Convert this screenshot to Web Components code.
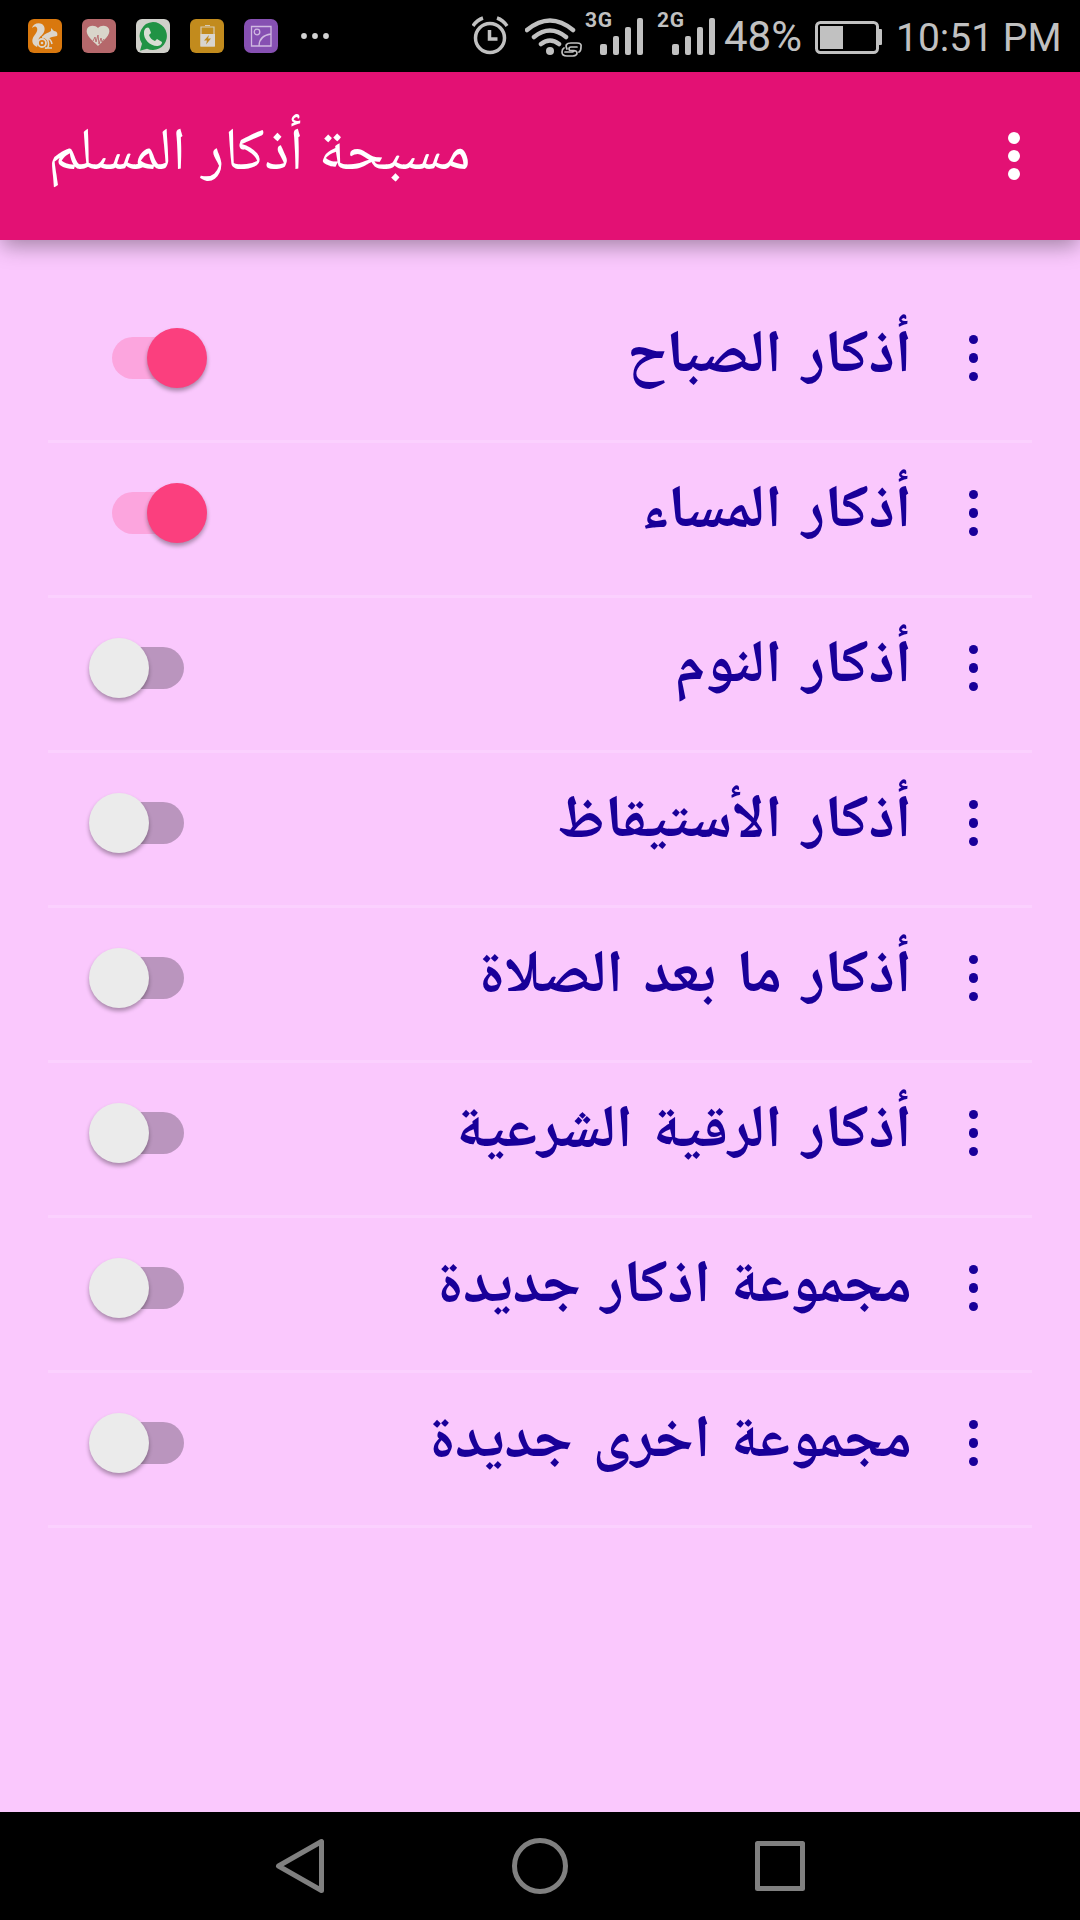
<!DOCTYPE html>
<html lang="ar">
<head>
<meta charset="utf-8">
<title>مسبحة أذكار المسلم</title>
<style>
  body {
    margin: 0;
    font-family: 'Noto Naskh Arabic', 'Noto Sans Arabic', 'DejaVu Sans', sans-serif;
  }
</style>
</head>
<body>
<azkar-app></azkar-app>

<script>
class StatusBar extends HTMLElement {
  constructor() {
    super();
    this.attachShadow({ mode: 'open' });
    this.shadowRoot.innerHTML = `
      <style>
        :host {
          display: flex;
          justify-content: space-between;
          height: 72px;
          background: #000;
          color: #c1c1c1;
          font-family: Roboto, sans-serif;
        }

        div {
          display: flex;
          align-items: center;
        }

        .apps {
          gap: 20px;
          padding-left: 28px;
        }

        .system {
          padding-right: 16px;
          white-space: nowrap;
        }

        svg {
          display: block;
          flex: none;
        }

        .percent {
          width: 90px;
          box-sizing: border-box;
          font-size: 42px;
          line-height: 72px;
          margin-top: 2px;
        }

        .time {
          width: 168px;
          padding-left: 2px;
          font-size: 39px;
          line-height: 72px;
          margin-top: 3px;
        }
      </style>
      <div class="apps">
        <svg width="34" height="34" viewBox="0 0 34 34">
          <rect width="34" height="34" rx="6" fill="#d9780e"/>
          <path fill="#dcd5cb" d="M4 9C5 5 10 3 14 5c4 3 3 8 0 11-2 2-4 3-3 6l-2 6c-5-2-6-7-3-11 2-3 4-5 3-8-1-2-3-2-5 0zM23 9l3 3c3 0 4 3 3 5l-5 1c-3 1-4 2-5 3-2-2-4-3-5-2 1-4 6-5 9-7z"/>
          <circle cx="14" cy="24" r="4" fill="none" stroke="#dcd5cb" stroke-width="1.800"/>
          <circle cx="14" cy="24" r="1.300" fill="#dcd5cb"/>
          <path d="M14 18q6 0 6.500 6t-3.500 5h7M19 19q4 1 5 6" fill="none" stroke="#dcd5cb" stroke-width="1.600"/>
        </svg>
        <svg width="34" height="34" viewBox="0 0 34 34">
          <rect width="34" height="34" rx="6" fill="#b5686b"/>
          <path fill="#d9d6ca" d="M16 9C13 6 7 6 5 10c-2 6 5 11 11 17 6-6 13-11 11-17-2-4-8-4-11-1z"/>
          <path d="M11 22l2-4 1 5 2-7 1 9 2-6 1 4 2-3" fill="none" stroke="#b5686b" stroke-width=".9"/>
        </svg>
        <svg width="34" height="34" viewBox="0 0 34 34">
          <rect width="34" height="34" rx="6" fill="#d0d0ca"/>
          <path fill="#219345" d="M17 3a14 14 0 1 1-6 26.700l-7 2 2-7A14 14 0 0 1 17 3z"/>
          <path fill="#d9ddd5" d="M10 9c2-1 3-1 4 2l1 3-2 2c1 3 3 5 6 6l2-2 5 3c0 3-3 4-5 4-7 0-14-7-13-14 0-2 1-3 2-4z"/>
        </svg>
        <svg width="34" height="34" viewBox="0 0 34 34">
          <rect width="34" height="34" rx="6" fill="#c28b1d"/>
          <path d="M11 8h13v19H11zM15 6.500h5" fill="none" stroke="#d8cbb4" stroke-width="1.200"/>
          <path fill="#d8d5cf" d="M10.500 15H25v12.500H10.500z"/>
          <path fill="#c28b1d" d="M19 16l-5 5.500h3l-1 4 5-6h-3z"/>
        </svg>
        <svg width="34" height="34" viewBox="0 0 34 34">
          <rect width="34" height="34" rx="7" fill="#8650b2"/>
          <g fill="none" stroke="#d0b9e1" stroke-width="1.300">
            <path d="M7.500 7.500h19.500V27H7.500zM15 27c0-7 5-11 12-12"/>
            <circle cx="13" cy="13" r="2.800"/>
          </g>
        </svg>
        <svg width="40" height="34" viewBox="0 0 40 34" fill="#d2d2d2">
          <circle cx="6" cy="17" r="2.900"/>
          <circle cx="17" cy="17" r="2.900"/>
          <circle cx="28" cy="17" r="2.900"/>
        </svg>
      </div>
      <div class="system">
        <svg width="53" height="72" viewBox="472 0 53 72" fill="none" stroke="#c1c1c1">
          <circle cx="490" cy="38" r="14.500" stroke-width="3.500"/>
          <path d="M489.500 30v9h8" stroke-width="3.500"/>
          <path d="M473 26q4-6 10-8M507 26q-4-6-10-8" stroke-width="3.500"/>
        </svg>
        <svg width="60" height="72" viewBox="525 0 60 72" fill="none" stroke="#c1c1c1" stroke-width="4.500" stroke-linecap="round">
          <path d="M527 30q23-19 46 0M534 37q16-13 32 0M541 44q9-7 18 0"/>
          <circle cx="550" cy="51" r="4" fill="#c1c1c1" stroke="none"/>
          <g stroke-width="1.700">
            <path d="M577 47h-6q-2 0-2 1.800t2 1.700h2q4 0 4 2.500t-4 3h-6q-5 0-5-4 0-3 2-4"/>
            <path d="M565 52h6q3 0 3-1.500M567 49q-3-6 4-6h6q5 0 4 4 0 4-2 5"/>
          </g>
        </svg>
        <svg width="72" height="72" viewBox="585 0 72 72" fill="#c1c1c1">
          <text x="585" y="27" font-size="21" font-weight="700" textLength="27">3G</text>
          <rect x="600" y="44" width="7" height="11" rx="2"/>
          <rect x="613" y="36" width="6" height="19" rx="2"/>
          <rect x="625" y="27" width="6" height="28" rx="2"/>
          <rect x="637" y="18" width="6" height="37" rx="2"/>
        </svg>
        <svg width="67" height="72" viewBox="585 0 67 72" fill="#c1c1c1">
          <text x="585" y="27" font-size="21" font-weight="700" textLength="27">2G</text>
          <rect x="600" y="44" width="7" height="11" rx="2"/>
          <rect x="613" y="36" width="6" height="19" rx="2"/>
          <rect x="625" y="27" width="6" height="28" rx="2"/>
          <rect x="637" y="18" width="6" height="37" rx="2"/>
        </svg>
        <span class="percent">48%</span>
        <svg width="80" height="72" viewBox="814 0 80 72">
          <rect x="816.500" y="22.500" width="61" height="30" rx="4" fill="none" stroke="#c1c1c1" stroke-width="3"/>
          <path fill="#c1c1c1" d="M820 26h23v23h-23zM878 29h3q1 0 1 1v14q0 1-1 1h-3z"/>
        </svg>
        <span class="time">10:51 PM</span>
      </div>
    `;
  }
}

class MoreButton extends HTMLElement {
  constructor() {
    super();
    this.attachShadow({ mode: 'open' });
    this.shadowRoot.innerHTML = `
      <style>
        :host {
          display: flex;
          flex-direction: column;
          align-items: center;
          gap: var(--dot-gap, 9px);
        }

        i {
          width: var(--dot-size, 9.2px);
          height: var(--dot-size, 9.2px);
          border-radius: 50%;
          background: currentColor;
        }
      </style>
      <i></i><i></i><i></i>
    `;
  }
}

class AppHeader extends HTMLElement {
  constructor() {
    super();
    this.attachShadow({ mode: 'open' });
    this.shadowRoot.innerHTML = `
      <style>
        :host {
          display: flex;
          align-items: center;
          justify-content: space-between;
          box-sizing: border-box;
          height: 168px;
          padding: 0 60px 0 48px;
          background: #e31174;
          color: #fff;
          box-shadow: 0 8px 20px -2px rgba(0, 0, 0, 0.35);
          position: relative;
        }

        h1 {
          margin: 0;
          font-size: 60px;
          font-weight: 400;
          line-height: 80px;
          word-spacing: 2px;
          white-space: nowrap;
        }

        more-button {
          --dot-size: 12px;
          --dot-gap: 6px;
        }
      </style>
      <h1 dir="rtl"><slot></slot></h1>
      <more-button></more-button>
    `;
  }
}

class ToggleSwitch extends HTMLElement {
  constructor() {
    super();
    this.attachShadow({ mode: 'open' });
    this.shadowRoot.innerHTML = `
      <style>
        :host {
          display: flex;
          align-items: center;
          width: 120px;
          height: 60px;
        }

        .track {
          width: 72px;
          height: 42px;
          margin: 0 24px;
          border-radius: 21px;
          background: #ba95be;
          display: flex;
          align-items: center;
        }

        .knob {
          flex: none;
          width: 60px;
          height: 60px;
          margin-left: -23.4px;
          border-radius: 50%;
          background: #ebebeb;
          box-shadow: 0 3px 4px rgba(0, 0, 0, 0.32);
        }

        :host([checked]) .track {
          background: #fca5de;
        }

        :host([checked]) .knob {
          margin-left: 35.4px;
          background: #fb3f7e;
        }
      </style>
      <div class="track"><div class="knob"></div></div>
    `;
  }
}

class ZikrRow extends HTMLElement {
  constructor() {
    super();
    this.attachShadow({ mode: 'open' });
    this.shadowRoot.innerHTML = `
      <style>
        :host {
          display: flex;
          align-items: center;
          box-sizing: border-box;
          height: 155px;
          padding: 0 54px 12px 40px;
          border-bottom: 3px solid #fbd1fe;
          color: #190099;
        }

        .label {
          flex: 1;
          margin-top: 2px;
          padding-right: 57px;
          font-size: 60px;
          font-weight: 700;
          line-height: 80px;
          word-spacing: 7px;
          white-space: nowrap;
        }
      </style>
      <toggle-switch></toggle-switch>
      <div class="label" dir="rtl"><slot></slot></div>
      <more-button></more-button>
    `;
  }

  static get observedAttributes() {
    return ['checked'];
  }

  attributeChangedCallback() {
    this.shadowRoot
      .querySelector('toggle-switch')
      .toggleAttribute('checked', this.hasAttribute('checked'));
  }
}

class NavBar extends HTMLElement {
  constructor() {
    super();
    this.attachShadow({ mode: 'open' });
    this.shadowRoot.innerHTML = `
      <style>
        :host {
          display: flex;
          justify-content: center;
          align-items: center;
          gap: 180px;
          height: 108px;
          background: #000;
        }
      </style>
      <svg width="60" height="60" viewBox="-30 -30 60 60" fill="none" stroke="#808080" stroke-width="5" stroke-linejoin="round">
        <path d="M-21.500 0l43-24.500v49z"/>
      </svg>
      <svg width="60" height="60" viewBox="-30 -30 60 60" fill="none" stroke="#808080" stroke-width="5">
        <circle r="25.500"/>
      </svg>
      <svg width="60" height="60" viewBox="-30 -30 60 60" fill="none" stroke="#808080" stroke-width="5" stroke-linejoin="round">
        <path d="M-22.500-22.500h45v45h-45z"/>
      </svg>
    `;
  }
}

class AzkarApp extends HTMLElement {
  constructor() {
    super();
    this.attachShadow({ mode: 'open' });
    this.shadowRoot.innerHTML = `
      <style>
        :host {
          display: flex;
          flex-direction: column;
          width: 1080px;
          height: 1920px;
          overflow: hidden;
          background: #fac8fd;
        }

        main {
          flex: 1;
          padding: 48px 48px 0;
        }
      </style>
      <status-bar></status-bar>
      <app-header>مسبحة أذكار المسلم</app-header>
      <main>
        <zikr-row checked>أذكار الصباح</zikr-row>
        <zikr-row checked>أذكار المساء</zikr-row>
        <zikr-row>أذكار النوم</zikr-row>
        <zikr-row>أذكار الأستيقاظ</zikr-row>
        <zikr-row>أذكار ما بعد الصلاة</zikr-row>
        <zikr-row>أذكار الرقية الشرعية</zikr-row>
        <zikr-row>مجموعة اذكار جديدة</zikr-row>
        <zikr-row>مجموعة اخرى جديدة</zikr-row>
      </main>
      <nav-bar></nav-bar>
    `;
  }
}

customElements.define('status-bar', StatusBar);
customElements.define('more-button', MoreButton);
customElements.define('app-header', AppHeader);
customElements.define('toggle-switch', ToggleSwitch);
customElements.define('zikr-row', ZikrRow);
customElements.define('nav-bar', NavBar);
customElements.define('azkar-app', AzkarApp);
</script>
</body>
</html>
